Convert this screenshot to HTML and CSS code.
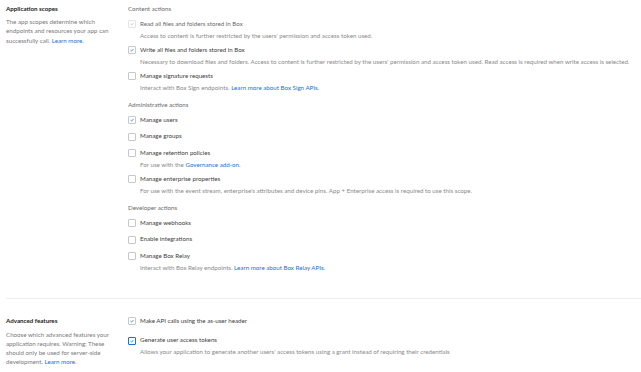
FILE: index.html
```html
<!DOCTYPE html>
<html lang="en">
<head>
    <meta charset="UTF-8">
    <meta name="viewport" content="width=device-width, initial-scale=1.0">
    <title>App configuration</title>
    <link rel="stylesheet" href="styles.css">
</head>
<body>
    <section class="setting">
        <div class="setting-info">
            <h2>Application scopes</h2>
            <p>The app scopes determine which endpoints and resources your app can successfully call. <a href="#">Learn more.</a></p>
        </div>
        <div class="setting-body">
            <div class="group">
                <h3>Content actions</h3>
                <div class="option">
                    <span class="checkbox is-disabled"><svg viewBox="0 0 8 8"><path d="M2 4.2 3.4 5.5 6 2.6"/></svg></span>
                    <div>
                        <div class="option-label is-muted">Read all files and folders stored in Box</div>
                        <div class="option-desc">Access to content is further restricted by the users' permission and access token used.</div>
                    </div>
                </div>
                <div class="option">
                    <span class="checkbox"><svg viewBox="0 0 8 8"><path d="M2 4.2 3.4 5.5 6 2.6"/></svg></span>
                    <div>
                        <div class="option-label">Write all files and folders stored in Box</div>
                        <div class="option-desc">Necessary to download files and folders. Access to content is further restricted by the users' permission and access token used. Read access is required when write access is selected.</div>
                    </div>
                </div>
                <div class="option">
                    <span class="checkbox"></span>
                    <div>
                        <div class="option-label">Manage signature requests</div>
                        <div class="option-desc">Interact with Box Sign endpoints. <a href="#">Learn more about Box Sign APIs.</a></div>
                    </div>
                </div>
            </div>
            <div class="group">
                <h3>Administrative actions</h3>
                <div class="option">
                    <span class="checkbox"><svg viewBox="0 0 8 8"><path d="M2 4.2 3.4 5.5 6 2.6"/></svg></span>
                    <div><div class="option-label">Manage users</div></div>
                </div>
                <div class="option">
                    <span class="checkbox"></span>
                    <div><div class="option-label">Manage groups</div></div>
                </div>
                <div class="option">
                    <span class="checkbox"></span>
                    <div>
                        <div class="option-label">Manage retention policies</div>
                        <div class="option-desc">For use with the <a href="#">Governance add-on.</a></div>
                    </div>
                </div>
                <div class="option">
                    <span class="checkbox"></span>
                    <div>
                        <div class="option-label">Manage enterprise properties</div>
                        <div class="option-desc">For use with the event stream, enterprise's attributes and device pins. App + Enterprise access is required to use this scope.</div>
                    </div>
                </div>
            </div>
            <div class="group">
                <h3>Developer actions</h3>
                <div class="option">
                    <span class="checkbox"></span>
                    <div><div class="option-label">Manage webhooks</div></div>
                </div>
                <div class="option">
                    <span class="checkbox"></span>
                    <div><div class="option-label">Enable integrations</div></div>
                </div>
                <div class="option">
                    <span class="checkbox"></span>
                    <div>
                        <div class="option-label">Manage Box Relay</div>
                        <div class="option-desc">Interact with Box Relay endpoints. <a href="#">Learn more about Box Relay APIs.</a></div>
                    </div>
                </div>
            </div>
        </div>
    </section>

    <section class="setting setting-advanced">
        <div class="setting-info">
            <h2>Advanced features</h2>
            <p>Choose which advanced features your application requires. Warning: These should only be used for server-side development. <a href="#">Learn more.</a></p>
        </div>
        <div class="setting-body">
            <div class="option">
                <span class="checkbox"><svg viewBox="0 0 8 8"><path d="M2 4.2 3.4 5.5 6 2.6"/></svg></span>
                <div><div class="option-label">Make API calls using the as-user header</div></div>
            </div>
            <div class="option">
                <span class="checkbox is-focused"><svg viewBox="0 0 8 8"><path d="M2 4.2 3.4 5.5 6 2.6"/></svg></span>
                <div>
                    <div class="option-label">Generate user access tokens</div>
                    <div class="option-desc">Allows your application to generate another users' access tokens using a grant instead of requiring their credentials</div>
                </div>
            </div>
        </div>
    </section>
</body>
</html>
```

FILE: styles.css
```css
body {
    margin: 0;
    padding: 3.5px 0 0;
    font-family: Lato, "Liberation Sans", sans-serif;
    font-size: 6.2px;
    color: #444;
    background: #fff;
}
a {
    color: #1a6fd8;
    text-decoration: none;
}
.setting {
    display: flex;
    gap: 10px;
    margin-left: 6px;
    padding-bottom: 18px;
}
.setting-advanced {
    border-top: 1px solid #eee;
    padding-top: 17px;
    padding-bottom: 0;
}
.setting-info {
    width: 112px;
    flex-shrink: 0;
}
.setting-info h2 {
    margin: 0;
    font-size: 6.2px;
    line-height: 9px;
    font-weight: 700;
    color: #222;
}
.setting-info p {
    margin: 4px 0 0;
    line-height: 9.5px;
    color: #7a7a7a;
}
.setting-advanced .setting-info p {
    margin-top: 5px;
    line-height: 9px;
}
.setting-body {
    flex: 1;
}
.group {
    margin-bottom: 10px;
}
.group h3 {
    margin: 0 0 6px;
    font-size: 6.2px;
    line-height: 9px;
    font-weight: 400;
    color: #6a6a6a;
}
.option {
    display: flex;
    gap: 4px;
    margin-bottom: 7px;
}
.setting-advanced .option {
    margin-bottom: 10px;
}
.checkbox {
    width: 6px;
    height: 6px;
    margin-top: 1.5px;
    border: 0.75px solid #c8c8c8;
    border-radius: 1px;
    flex-shrink: 0;
    background: #fff;
    display: flex;
}
.checkbox svg {
    width: 100%;
    height: 100%;
    fill: none;
    stroke: #1a6fd8;
    stroke-width: 1;
}
.checkbox.is-disabled {
    border-color: #e4e4e4;
}
.checkbox.is-disabled svg {
    stroke: #bbb;
}
.checkbox.is-focused {
    border-color: #1a6fd8;
    border-width: 1px;
}
.option-label {
    line-height: 9px;
    color: #3d3d3d;
}
.option-label.is-muted {
    color: #6a6a6a;
}
.option-desc {
    margin-top: 5px;
    line-height: 5px;
    color: #8a8a8a;
}
```
